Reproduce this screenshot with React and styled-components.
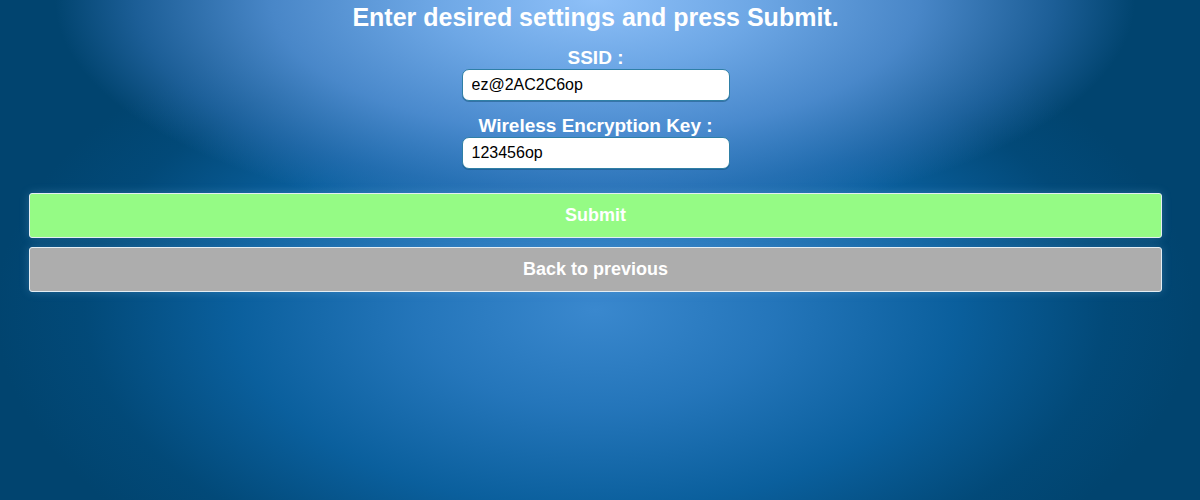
import React from "react";
import styled, { createGlobalStyle } from "styled-components";

const Global = createGlobalStyle`
  html, body {
    margin: 0;
    padding: 0;
    height: 100%;
  }
  body {
    min-height: 500px;
    overflow: hidden;
    font-family: "Liberation Sans", Arial, sans-serif;
    background-color: #01446f;
    background-image:
      radial-gradient(ellipse 540px 225px at 595px 0px, rgba(142,192,248,1) 0%, rgba(115,172,235,0.95) 30%, rgba(85,146,215,0.85) 60%, rgba(55,120,190,0.5) 85%, rgba(30,95,160,0) 100%),
      radial-gradient(ellipse 600px 330px at 595px 310px, rgba(58,136,206,1) 0%, rgba(38,120,190,0.95) 30%, rgba(12,100,165,0.85) 60%, rgba(3,80,132,0.45) 85%, rgba(1,68,111,0) 100%);
    background-repeat: no-repeat;
  }
`;

const Page = styled.div`
  width: 1190px;
  box-sizing: border-box;
  padding: 3px 28px 0 29px;
  display: flex;
  flex-direction: column;
  align-items: center;
`;

const Title = styled.h1`
  margin: 0;
  font-size: 25px;
  line-height: 28px;
  font-weight: bold;
  color: #ffffff;
  text-align: center;
`;

const Field = styled.div`
  display: flex;
  flex-direction: column;
  align-items: center;
  margin-top: ${(p) => p.$top}px;
`;

const Label = styled.label`
  font-size: 19px;
  line-height: 20px;
  font-weight: bold;
  color: #ffffff;
  text-align: center;
`;

const Input = styled.input`
  width: 268px;
  height: 32px;
  box-sizing: border-box;
  margin-top: 1px;
  padding: 0 9px;
  border: 1px solid #2f7fa6;
  border-radius: 7px;
  background: #ffffff;
  font-family: "Liberation Sans", Arial, sans-serif;
  font-size: 16px;
  color: #000000;
  outline: none;
  box-shadow: 0 1px 0 rgba(20, 80, 120, 0.5);
`;

const Buttons = styled.div`
  align-self: stretch;
  display: flex;
  flex-direction: column;
  gap: 9px;
  margin-top: 24px;
`;

const Button = styled.button`
  height: 45px;
  width: 100%;
  box-sizing: border-box;
  border: 1px solid #e4eef4;
  border-radius: 3px;
  background: ${(p) => p.$bg};
  color: #ffffff;
  font-family: "Liberation Sans", Arial, sans-serif;
  font-size: 18px;
  font-weight: bold;
  cursor: pointer;
  box-shadow: 0 0 10px rgba(120, 180, 230, 0.3);
`;

export default function App() {
  return (
    <>
      <Global />
      <Page>
        <Title>Enter desired settings and press Submit.</Title>
        <Field $top={17}>
          <Label htmlFor="ssid">SSID :</Label>
          <Input id="ssid" defaultValue="ez@2AC2C6op" />
        </Field>
        <Field $top={15}>
          <Label htmlFor="key">Wireless Encryption Key :</Label>
          <Input id="key" defaultValue="123456op" />
        </Field>
        <Buttons>
          <Button $bg="#95fb85">Submit</Button>
          <Button $bg="#adadad">Back to previous</Button>
        </Buttons>
      </Page>
    </>
  );
}
